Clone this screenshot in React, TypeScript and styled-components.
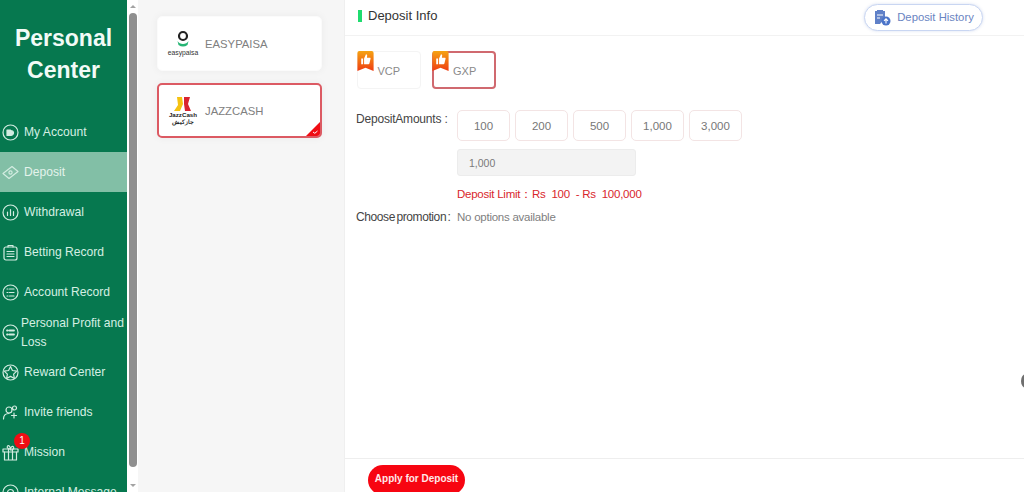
import React from 'react';
import styled, {createGlobalStyle} from 'styled-components';

const GlobalStyle = createGlobalStyle`
    html, body {
        margin: 0;
        padding: 0;
        height: 100%;
        overflow: hidden;
        background: #fff;
        font-family: "Liberation Sans", Arial, sans-serif;
    }
    * {
        box-sizing: border-box;
    }
`;

const Page = styled.div`
    display: flex;
    width: 1024px;
    height: 492px;
    overflow: hidden;
`;

const Sidebar = styled.aside`
    flex: 0 0 127px;
    height: 492px;
    overflow: hidden;
    background: #06784f;
    color: #d9f0e6;
`;

const Title = styled.h1`
    margin: 0;
    padding: 22px 0 26px;
    font-size: 23px;
    line-height: 32px;
    font-weight: 700;
    text-align: center;
    color: #f2fbf7;
`;

const NavList = styled.nav`
    display: flex;
    flex-direction: column;
`;

const NavItem = styled.div<{$active?: boolean}>`
    position: relative;
    flex: 0 0 40.1px;
    display: flex;
    align-items: center;
    gap: 5px;
    padding: 0 0 0 2px;
    font-size: 12.1px;
    line-height: 19px;
    background: ${p => (p.$active ? '#82bfa6' : 'transparent')};
    color: ${p => (p.$active ? '#e4f3ec' : '#d5efe3')};
`;

const NavIcon = styled.svg`
    flex: 0 0 17px;
    width: 17px;
    height: 17px;
    fill: none;
    stroke: #d3ece1;
    stroke-width: 1.2;
    stroke-linecap: round;
    stroke-linejoin: round;
`;

const NavLabel = styled.span<{$tight?: boolean}>`
    margin-left: ${p => (p.$tight ? '-3px' : '0')};
    white-space: ${p => (p.$tight ? 'normal' : 'nowrap')};
`;

const Badge = styled.span`
    position: absolute;
    top: 0;
    left: 14px;
    width: 16px;
    height: 16px;
    border-radius: 50%;
    background: #f00d14;
    color: #fff;
    font-size: 10px;
    line-height: 15px;
    text-align: center;
`;

const ScrollTrack = styled.div`
    flex: 0 0 11px;
    height: 492px;
    display: flex;
    flex-direction: column;
    align-items: center;
    background: #fff;
`;

const ScrollArrow = styled.div<{$down?: boolean}>`
    flex: 0 0 13px;
    display: flex;
    align-items: center;
    justify-content: center;
    &::before {
        content: '';
        width: 0;
        height: 0;
        border-left: 3px solid transparent;
        border-right: 3px solid transparent;
        ${p => (p.$down ? 'border-top: 3px solid #a3a3a3;' : 'border-bottom: 3px solid #a3a3a3;')}
    }
`;

const ScrollThumb = styled.div`
    width: 8px;
    margin-left: 1px;
    height: 454px;
    border-radius: 4px;
    background: #8f8f8f;
`;

const ScrollSpacer = styled.div`
    flex: 1;
`;

const ChannelPanel = styled.section`
    flex: 0 0 207px;
    display: flex;
    flex-direction: column;
    gap: 12px;
    padding: 16px 0 0 19px;
    background: #f6f6f6;
    border-right: 1px solid #efefef;
`;

const ChannelCard = styled.div<{$selected?: boolean}>`
    position: relative;
    width: 165px;
    height: 55px;
    display: flex;
    align-items: center;
    gap: 6px;
    padding-left: ${p => (p.$selected ? '8px' : '9px')};
    overflow: hidden;
    background: #fff;
    border-radius: 5px;
    border: ${p => (p.$selected ? '2px solid #dc5a63' : '1px solid #fbfbfb')};
    box-shadow: 0 0 8px rgba(0, 0, 0, 0.05);
    font-size: 11.3px;
    color: #808080;
`;

const LogoBox = styled.svg`
    flex: 0 0 32px;
    width: 32px;
    height: 32px;
`;

const LogoText = styled.text`
    font-family: "Liberation Sans", Arial, sans-serif;
    text-anchor: middle;
`;

const Corner = styled.svg`
    position: absolute;
    right: 0;
    bottom: 0;
    width: 14px;
    height: 14px;
`;

const Main = styled.main`
    flex: 1;
    display: flex;
    flex-direction: column;
    min-width: 0;
    background: #fff;
`;

const MainHeader = styled.header`
    flex: 0 0 36px;
    display: flex;
    align-items: center;
    justify-content: space-between;
    padding: 0 41px 4px 13px;
    border-bottom: 1px solid #f2f2f2;
`;

const HeaderTitle = styled.h2`
    margin: 0;
    display: flex;
    align-items: center;
    gap: 6px;
    font-size: 13px;
    font-weight: 400;
    color: #333;
    &::before {
        content: '';
        width: 4px;
        height: 12px;
        background: #1fdc6f;
    }
`;

const HistoryButton = styled.button`
    width: 119px;
    height: 27px;
    margin-top: 3px;
    display: flex;
    align-items: center;
    justify-content: center;
    gap: 6px;
    padding: 0;
    background: #fff;
    border: 1.5px solid #c9d6f2;
    border-radius: 14px;
    box-shadow: 0 0 3px rgba(90, 125, 200, 0.25);
    font: 11.3px "Liberation Sans", Arial, sans-serif;
    color: #6a85c2;
`;

const HistoryIcon = styled.svg`
    width: 18px;
    height: 18px;
`;

const Content = styled.div`
    flex: 1;
    min-height: 0;
    padding: 15px 0 0 11px;
    position: relative;
`;

const CurrencyRow = styled.div`
    display: flex;
    gap: 11px;
    margin-left: 1px;
`;

const CurrencyTile = styled.div<{$selected?: boolean}>`
    position: relative;
    width: 64px;
    height: 38px;
    display: flex;
    align-items: center;
    padding: 2px 0 0 ${p => (p.$selected ? '19px' : '19.5px')};
    border-radius: 4px;
    border: ${p => (p.$selected ? '2px solid #d0696f' : '1px solid #f4f4f4')};
    font-size: 11px;
    color: #8a8a8a;
`;

const Ribbon = styled.svg<{$selected?: boolean}>`
    position: absolute;
    left: ${p => (p.$selected ? '-2px' : '-1px')};
    top: ${p => (p.$selected ? '-2px' : '-1px')};
    width: 17px;
    height: 20px;
`;

const FormRow = styled.div<{$top: number}>`
    display: flex;
    margin-top: ${p => p.$top}px;
`;

const FormLabel = styled.div<{$tight?: boolean}>`
    flex: 0 0 101px;
    min-width: 0;
    padding-top: ${p => (p.$tight ? '0' : '1px')};
    font-size: 12px;
    line-height: 16px;
    letter-spacing: ${p => (p.$tight ? '-0.4px' : '-0.2px')};
    word-spacing: ${p => (p.$tight ? '-1.5px' : '0')};
    color: #444;
    white-space: nowrap;
`;

const AmountColumn = styled.div`
    display: flex;
    flex-direction: column;
`;

const AmountRow = styled.div`
    display: flex;
    gap: 5px;
`;

const AmountButton = styled.div`
    width: 53px;
    height: 31px;
    display: flex;
    align-items: center;
    justify-content: center;
    background: #fff;
    border: 1px solid #f3e4e4;
    border-radius: 5px;
    font-size: 11.5px;
    color: #777;
`;

const AmountInput = styled.div`
    width: 179px;
    height: 27px;
    margin-top: 8px;
    display: flex;
    align-items: center;
    padding-left: 11px;
    background: #f3f3f3;
    border: 1px solid #ececec;
    border-radius: 3px;
    font-size: 10.5px;
    color: #7a7a7a;
`;

const LimitText = styled.div`
    margin-top: 10px;
    font-size: 11.5px;
    line-height: 16px;
    letter-spacing: -0.25px;
    color: #d9262c;
    white-space: pre;
`;

const MutedValue = styled.div`
    font-size: 11.5px;
    line-height: 16px;
    letter-spacing: -0.25px;
    color: #808080;
`;

const EdgeHandle = styled.div`
    position: absolute;
    right: -7px;
    top: 338px;
    width: 10px;
    height: 14px;
    border-radius: 50%;
    background: #6f6f6f;
`;

const Footer = styled.footer`
    flex: 0 0 34px;
    min-height: 0;
    overflow: hidden;
    display: flex;
    align-items: flex-start;
    padding: 6px 0 0 23px;
    border-top: 1px solid #eeeeee;
`;

const ApplyButton = styled.button`
    flex: 0 0 97px;
    height: 30px;
    padding: 0 0 3px;
    background: #f70511;
    border: none;
    border-radius: 15px;
    font: 700 10px "Liberation Sans", Arial, sans-serif;
    color: #ffe9e9;
`;

type NavEntry = {label: string; icon: React.ReactNode; active?: boolean; tight?: boolean; badge?: string};

const navEntries: NavEntry[] = [
    {
        label: 'My Account',
        icon: (
            <>
                <circle cx="8.5" cy="8.5" r="7.5" />
                <path d="M5 6h3.5v5.5H5zM8.5 6.5c2 0 3 1 3 2.300s-1 2.500-3 2.700" fill="#d3ece1" />
            </>
        ),
    },
    {
        label: 'Deposit',
        active: true,
        icon: (
            <>
                <path d="M1 9.500 10 2.500l6 5-9 7z" />
                <circle cx="8.5" cy="8.5" r="1.6" />
            </>
        ),
    },
    {
        label: 'Withdrawal',
        icon: (
            <>
                <circle cx="8.5" cy="8.5" r="7.5" />
                <path d="M5.500 8v3.500M8.500 5.500v6M11.500 7.500v4" />
            </>
        ),
    },
    {
        label: 'Betting Record',
        icon: (
            <>
                <rect x="2" y="3" width="13" height="13" rx="2" />
                <path d="M6 3V1.500h5V3M5 7.500h7M5 10h7M5 12.500h7" />
            </>
        ),
    },
    {
        label: 'Account Record',
        icon: (
            <>
                <circle cx="8.5" cy="8.5" r="7.5" />
                <path d="M5 5h1M5 8.500h1M5 12h1M7.500 5H12M7.500 8.500H12M7.500 12H12" />
            </>
        ),
    },
    {
        label: 'Personal Profit and Loss',
        tight: true,
        icon: (
            <>
                <circle cx="8.5" cy="8.5" r="7.5" />
                <path d="M5 6.500h.8M5 10.500h.8M7.500 6.500H12M7.500 10.500H12" strokeWidth="1.8" />
            </>
        ),
    },
    {
        label: 'Reward Center',
        icon: (
            <>
                <circle cx="8.5" cy="8.5" r="7.5" />
                <path d="m8.500 2.500 1.900 4 4.400.6-3.200 3 .8 4.400-3.900-2.100-3.900 2.100.8-4.400-3.200-3 4.400-.6z" />
            </>
        ),
    },
    {
        label: 'Invite friends',
        icon: (
            <>
                <circle cx="7" cy="6" r="3" />
                <circle cx="12.500" cy="4" r="2" />
                <path d="M1.500 15c0-3.500 2.300-5.500 5.500-5.500M12 9v5M9.500 11.500h5" />
            </>
        ),
    },
    {
        label: 'Mission',
        badge: '1',
        icon: (
            <>
                <rect x="1" y="5" width="15" height="3" />
                <path d="M2.500 8v8h12V8M6.500 5v11M10.500 5v11M8.500 5C6 5 4.500 3.500 5.500 2s3 1 3 3c0-2 2-3.500 3-2s-.5 3-3 3" />
            </>
        ),
    },
    {
        label: 'Internal Message',
        icon: (
            <>
                <circle cx="8.5" cy="8.5" r="7.5" />
                <circle cx="8.5" cy="8.5" r="3" />
            </>
        ),
    },
];

const amounts = ['100', '200', '500', '1,000', '3,000'];

const ThumbRibbon = ({selected}: {selected?: boolean}) => (
    <Ribbon viewBox="0 0 17 21" $selected={selected}>
        <defs>
            <linearGradient id="ribbonFill" x1="0" y1="0" x2="0" y2="1">
                <stop offset="0" stopColor="#f5a313" />
                <stop offset="1" stopColor="#ef3d12" />
            </linearGradient>
        </defs>
        <path d="M2 0h13a2 2 0 0 1 2 2v19l-8.500-3.500L0 21V2a2 2 0 0 1 2-2z" fill="url(#ribbonFill)" />
        <path d="M4 8h2v6H4zM7 8l2-4.500c1 0 1.500.8 1.200 2L10 7h3c.7 0 1 .6.800 1.200l-1.200 5c-.1.500-.5.800-1 .8H7z" fill="#fff" />
    </Ribbon>
);

const App = () => {
    return (
        <>
            <GlobalStyle />
            <Page>
                <Sidebar>
                    <Title>
                        Personal
                        <br />
                        Center
                    </Title>
                    <NavList>
                        {navEntries.map(entry => (
                            <NavItem key={entry.label} $active={entry.active}>
                                <NavIcon viewBox="0 0 17 17">{entry.icon}</NavIcon>
                                <NavLabel $tight={entry.tight}>{entry.label}</NavLabel>
                                {entry.badge && <Badge>{entry.badge}</Badge>}
                            </NavItem>
                        ))}
                    </NavList>
                </Sidebar>
                <ScrollTrack>
                    <ScrollArrow />
                    <ScrollThumb />
                    <ScrollSpacer />
                    <ScrollArrow $down />
                </ScrollTrack>
                <ChannelPanel>
                    <ChannelCard>
                        <LogoBox viewBox="0 0 32 32">
                            <circle cx="16" cy="8" r="4" fill="none" stroke="#222" strokeWidth="2.2" />
                            <path d="M10.500 13c2 4 9 4 11 0l-1 4c-3 2-6 2-9 0z" fill="#25b574" />
                            <LogoText x="16" y="27" fontSize="6.8" fill="#333">
                                easypaisa
                            </LogoText>
                        </LogoBox>
                        <span>EASYPAISA</span>
                    </ChannelCard>
                    <ChannelCard $selected>
                        <LogoBox viewBox="0 0 32 32">
                            <path d="M10 2h5l1 7-3 7H7l4-6z" fill="#f5c211" />
                            <path d="M17 2h6l-2 7 3 7h-6l-1-7z" fill="#d9232e" />
                            <LogoText x="16" y="22" fontSize="6.2" fontWeight="700" fill="#222">
                                JazzCash
                            </LogoText>
                            <LogoText x="16" y="29" fontSize="5.5" fontWeight="700" fill="#222">
                                جازکیش
                            </LogoText>
                        </LogoBox>
                        <span>JAZZCASH</span>
                        <Corner viewBox="0 0 14 14">
                            <path d="M14 0v14H0z" fill="#f00d14" />
                            <path d="m7 10 1.800 1.300L11.500 9" fill="none" stroke="#fff" strokeWidth="1" />
                        </Corner>
                    </ChannelCard>
                </ChannelPanel>
                <Main>
                    <MainHeader>
                        <HeaderTitle>Deposit Info</HeaderTitle>
                        <HistoryButton>
                            <HistoryIcon viewBox="0 0 18 18">
                                <path d="M2 3h2V2h6v1h2v7l-5 6H2z" fill="#5f80c8" />
                                <path d="M4 7h6M4 10h3" stroke="#fff" strokeWidth="1.2" />
                                <circle cx="13" cy="13" r="4.5" fill="#4b74c9" />
                                <path d="M13 15.500v-4.500M11 12.800l2-2 2 2" stroke="#fff" strokeWidth="1.1" fill="none" />
                            </HistoryIcon>
                            Deposit History
                        </HistoryButton>
                    </MainHeader>
                    <Content>
                        <CurrencyRow>
                            <CurrencyTile>
                                <ThumbRibbon />
                                VCP
                            </CurrencyTile>
                            <CurrencyTile $selected>
                                <ThumbRibbon selected />
                                GXP
                            </CurrencyTile>
                        </CurrencyRow>
                        <FormRow $top={21}>
                            <FormLabel>DepositAmounts :</FormLabel>
                            <AmountColumn>
                                <AmountRow>
                                    {amounts.map(amount => (
                                        <AmountButton key={amount}>{amount}</AmountButton>
                                    ))}
                                </AmountRow>
                                <AmountInput>1,000</AmountInput>
                                <LimitText>{'Deposit Limit：Rs  100  - Rs  100,000'}</LimitText>
                            </AmountColumn>
                        </FormRow>
                        <FormRow $top={7}>
                            <FormLabel $tight>Choose promotion :</FormLabel>
                            <MutedValue>No options available</MutedValue>
                        </FormRow>
                        <EdgeHandle />
                    </Content>
                    <Footer>
                        <ApplyButton>Apply for Deposit</ApplyButton>
                    </Footer>
                </Main>
            </Page>
        </>
    );
};

export default App;
